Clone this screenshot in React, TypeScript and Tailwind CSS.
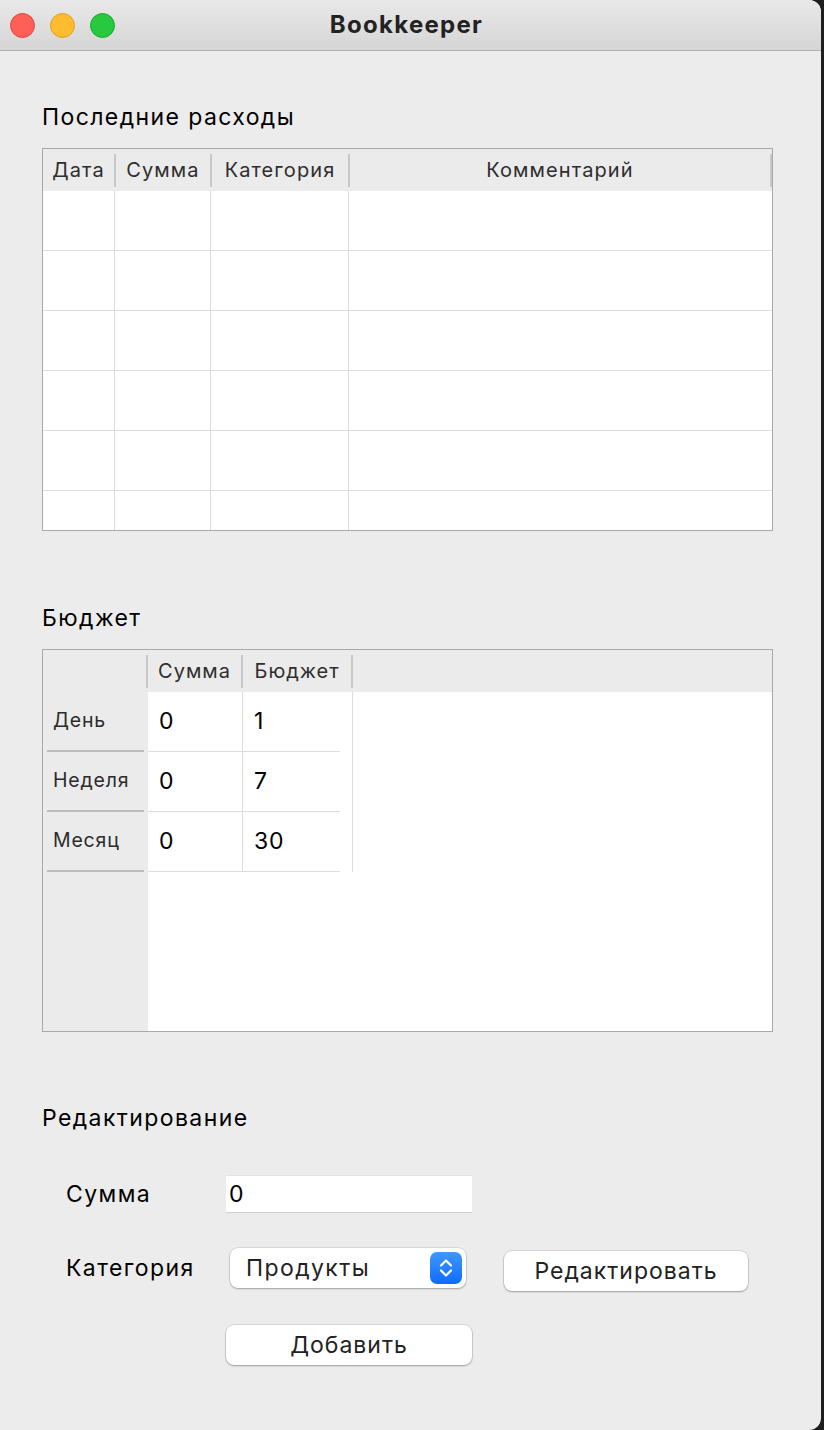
import { ChevronUp, ChevronDown } from 'lucide-react';

const expenseColumns = [
  { label: 'Дата', head: 'w-[71px]', cell: 'w-[72px]' },
  { label: 'Сумма', head: 'w-[94px]', cell: 'w-[96px]' },
  { label: 'Категория', head: 'w-[136px]', cell: 'w-[138px]' },
  { label: 'Комментарий', head: 'w-[420px]', cell: 'flex-1' },
];

const budgetRows = [
  { label: 'День', sum: '0', budget: '1' },
  { label: 'Неделя', sum: '0', budget: '7' },
  { label: 'Месяц', sum: '0', budget: '30' },
];

const HeadSep = () => <div className="w-[2px] h-[33px] bg-[#c8c8c8] shrink-0" />;

const TrafficLights = () => (
  <div className="flex items-center gap-[15px] pl-[10px]">
    <span className="w-[25px] h-[25px] rounded-full bg-[#fe5f57] border border-[#e2463f]" />
    <span className="w-[25px] h-[25px] rounded-full bg-[#febc2e] border border-[#dea123]" />
    <span className="w-[25px] h-[25px] rounded-full bg-[#28c840] border border-[#1aab29]" />
  </div>
);

const ExpensesTable = () => (
  <div className="w-[731px] h-[383px] border border-[#a9a9a9] bg-white overflow-hidden flex flex-col">
    {/* header */}
    <div className="h-[42px] bg-[#ebebeb] flex items-center shrink-0">
      {expenseColumns.map((c) => (
        <div key={c.label} className="flex items-center">
          <div className={`${c.head} text-center text-[20px] tracking-[1.1px] text-[#2e2e2e]`}>{c.label}</div>
          <HeadSep />
        </div>
      ))}
    </div>
    {/* body */}
    <div className="flex-1 overflow-hidden">
      {Array.from({ length: 6 }).map((_, i) => (
        <div key={i} className="flex h-[60px] border-b border-[#dcdcdc]">
          {expenseColumns.map((c, j) => (
            <div
              key={j}
              className={`${c.cell} ${j < 3 ? 'border-r border-[#dcdcdc]' : 'mr-[2px]'}`}
            />
          ))}
        </div>
      ))}
    </div>
  </div>
);

const BudgetTable = () => (
  <div className="w-[731px] h-[383px] border border-[#a9a9a9] bg-white overflow-hidden flex flex-col">
    <div className="h-[42px] bg-[#ebebeb] flex items-center shrink-0 text-[20px] tracking-[1px] text-[#2e2e2e]">
      <div className="w-[103px]" />
      <HeadSep />
      <div className="w-[93px] text-center">Сумма</div>
      <HeadSep />
      <div className="w-[108px] text-center">Бюджет</div>
      <HeadSep />
    </div>
    <div className="flex-1 flex">
      <div className="w-[105px] bg-[#ebebeb] flex flex-col">
        {budgetRows.map((r) => (
          <div key={r.label} className="h-[60px] flex flex-col">
            <div className="flex-1 flex items-center pl-[10px] text-[19.5px] tracking-[0.8px] text-[#2b2b2b]">{r.label}</div>
            <div className="h-[2px] mx-[4px] bg-[#bcbcbc]" />
          </div>
        ))}
      </div>
      <div className="flex flex-col text-[23px] text-black">
        {budgetRows.map((r) => (
          <div key={r.label} className="flex h-[60px]">
            <div className="w-[95px] border-r border-b border-[#dcdcdc] flex items-center pl-[11px]">
              {r.sum}
            </div>
            <div className="w-[110px] border-r border-[#dcdcdc] flex flex-col">
              <div className="w-[97px] flex-1 border-b border-[#dcdcdc] flex items-center pl-[11px] tracking-[0.8px]">
                {r.budget}
              </div>
            </div>
          </div>
        ))}
      </div>
    </div>
  </div>
);

const MacButton = ({ children, className = '' }: { children: React.ReactNode; className?: string }) => (
  <div
    className={`h-[40px] bg-white rounded-[8px] shadow-[0_0_0_0.5px_rgba(0,0,0,0.18),0_1px_2px_rgba(0,0,0,0.28)] flex items-center justify-center text-[23px] tracking-[1px] text-[#222] ${className}`}
  >
    {children}
  </div>
);

export default function App() {
  return (
    <div className="w-[824px] h-[1430px] bg-[#1e1e1e] font-['Inter','Liberation_Sans',sans-serif]">
      <div className="w-[821px] h-full bg-[#ececec] rounded-tr-[12px] rounded-br-[12px] overflow-hidden flex flex-col">
        {/* title bar */}
        <div className="h-[51px] shrink-0 bg-gradient-to-b from-[#e9e9e9] to-[#d5d5d5] border-b border-[#b1b1b1] flex items-center relative">
          <TrafficLights />
          <div className="absolute inset-0 flex items-center justify-center pr-[8px] pb-[1px] text-[24px] tracking-[1.3px] font-bold text-[#222]">
            Bookkeeper
          </div>
        </div>

        <div className="pl-[42px] flex flex-col">
          <h2 className="mt-[53px] h-[26px] leading-[26px] text-[23px] tracking-[1.4px] text-black">Последние расходы</h2>
          <div className="mt-[18px]">
            <ExpensesTable />
          </div>

          <h2 className="mt-[74px] h-[26px] leading-[26px] text-[23px] tracking-[1.4px] text-black">Бюджет</h2>
          <div className="mt-[18px]">
            <BudgetTable />
          </div>

          <h2 className="mt-[73px] h-[26px] leading-[26px] text-[23px] tracking-[1.4px] text-black">Редактирование</h2>

          {/* form */}
          <div className="pl-[24px] flex flex-col text-[23px] tracking-[1.4px] text-black">
            <div className="mt-[44px] flex items-center h-[38px]">
              <div className="w-[160px]">Сумма</div>
              <div className="w-[246px] h-[38px] bg-white border-b border-[#cfcfcf] border-t border-t-[#e4e4e4] flex items-center pl-[3px]">
                0
              </div>
            </div>
            <div className="mt-[35px] flex items-start h-[43px]">
              <div className="w-[164px] h-[40px] flex items-center">Категория</div>
              <div className="w-[236px] h-[40px] bg-white rounded-[8px] shadow-[0_0_0_0.5px_rgba(0,0,0,0.15),0_1px_2px_rgba(0,0,0,0.28)] flex items-center justify-between pl-[16px] pr-[4px] text-[#222]">
                <span>Продукты</span>
                <span className="w-[32px] h-[32px] rounded-[7px] bg-gradient-to-b from-[#3f97ff] to-[#0a6cfe] flex flex-col items-center justify-center text-white">
                  <ChevronUp size={20} strokeWidth={2.6} className="-mb-[5px]" />
                  <ChevronDown size={20} strokeWidth={2.6} className="-mt-[5px]" />
                </span>
              </div>
              <MacButton className="ml-[38px] mt-[3px] w-[244px]">Редактировать</MacButton>
            </div>
            <div className="mt-[34px] pl-[160px]">
              <MacButton className="w-[246px]">Добавить</MacButton>
            </div>
          </div>
        </div>
      </div>
    </div>
  );
}
